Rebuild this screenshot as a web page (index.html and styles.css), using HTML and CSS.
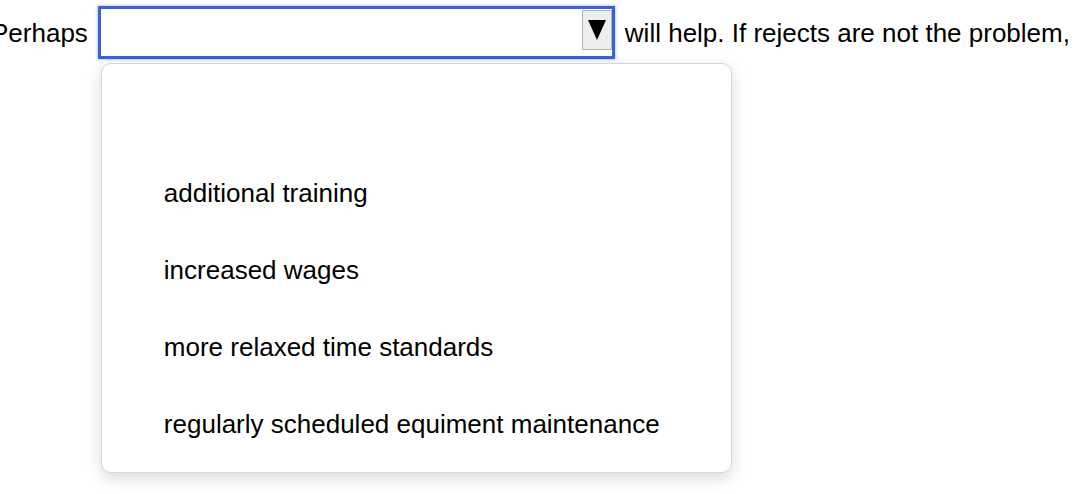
FILE: index.html
```html
<!DOCTYPE html>
<html lang="en">
<head>
<meta charset="utf-8">
<title>Dropdown</title>
<link rel="stylesheet" href="styles.css">
</head>
<body>
<div class="page">
  <div class="line">
    <span class="txt">Perhaps</span>
    <div class="select-wrap">
      <div class="select">
        <div class="btn">
          <svg width="18" height="20" viewBox="0 0 18 20"><polygon points="0,0 18,0 9,20" fill="#000"/></svg>
        </div>
      </div>
      <ul class="menu">
        <li class="opt"></li>
        <li class="opt">additional training</li>
        <li class="opt">increased wages</li>
        <li class="opt">more relaxed time standards</li>
        <li class="opt">regularly scheduled equiment maintenance</li>
      </ul>
    </div>
    <span class="txt">will help. If rejects are not the problem,</span>
  </div>
</div>
</body>
</html>
```

FILE: styles.css
```css
html {
  background: #fff;
}
body {
  margin: 0;
  padding: 0;
  font-family: "Liberation Sans", Arial, Helvetica, sans-serif;
  font-size: 26px;
  color: #000;
}
.page {
  min-height: 490px;
}
.line {
  display: flex;
  align-items: center;
  gap: 10px;
  margin-left: -9px;
  padding-top: 6px;
  white-space: nowrap;
}
.txt {
  line-height: 30px;
}
.select-wrap {
  position: relative;
  flex: none;
}
.select {
  box-sizing: border-box;
  width: 517px;
  height: 53px;
  border: 3px solid #3b62d3;
  box-shadow: 0 0 3px rgba(59, 98, 211, 0.55);
  background: #fff;
  display: flex;
  justify-content: flex-end;
  align-items: flex-start;
  padding-top: 1px;
}
.btn {
  box-sizing: border-box;
  width: 30px;
  height: 40px;
  background: #ededed;
  border: 1px solid #b4b4b4;
  display: flex;
  align-items: center;
  justify-content: center;
}
.btn svg {
  display: block;
  margin-top: -1px;
}
.menu {
  position: absolute;
  left: 3px;
  top: 57px;
  z-index: 2;
  box-sizing: border-box;
  width: 631px;
  height: 410px;
  margin: 0;
  padding: 14px 0 0 62px;
  list-style: none;
  background: #fff;
  border: 1px solid #d6d6d6;
  border-radius: 10px;
  box-shadow: 0 5px 16px rgba(0, 0, 0, 0.15);
}
.opt {
  height: 77px;
  line-height: 77px;
}
```
